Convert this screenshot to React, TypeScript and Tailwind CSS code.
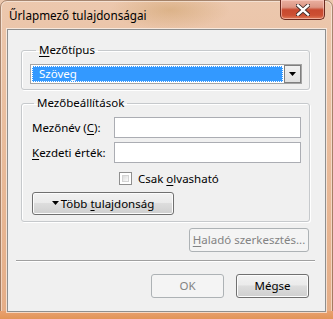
import React from 'react';

const font = { fontFamily: '"Noto Sans", "Open Sans", sans-serif' };

const btnFace =
  'bg-[linear-gradient(#f2f2f2_0%,#ebebeb_45%,#dddddd_50%,#cfcfcf_100%)] border border-[#707070] rounded-[3px] shadow-[inset_0_0_0_1px_#fcfcfc]';
const btnDisabled = 'bg-[#f4f4f4] border border-[#adb2b5] rounded-[3px] text-[#838383]';

const Arrow = () => (
  <svg width="7" height="4" viewBox="0 0 7 4" className="mr-[2px] mb-[2px]">
    <path d="M0 0h7L3.5 4z" fill="#000" />
  </svg>
);

const CloseButton = () => (
  <div className="absolute top-0 right-[8px] w-[45px] h-[20px] rounded-b-[5px] border border-t-0 border-[#6a2a1f] bg-[linear-gradient(#eab0a0_0%,#dc9684_38%,#c8492f_52%,#cc4f33_80%,#e07a58_100%)] shadow-[inset_0_0_0_1px_rgba(255,215,205,0.55)] flex items-center justify-center">
    <svg width="14" height="12" viewBox="0 0 14 12">
      <path
        d="M2 1.5l5 4.5 5-4.5M2 10.5l5-4.5 5 4.5"
        stroke="#3c2a28"
        strokeWidth="4.2"
        strokeLinecap="square"
        fill="none"
      />
      <path
        d="M2 1.5l5 4.5 5-4.5M2 10.5l5-4.5 5 4.5"
        stroke="#fff"
        strokeWidth="2.4"
        strokeLinecap="square"
        fill="none"
      />
    </svg>
  </div>
);

export default function App() {
  return (
    <div
      className="relative w-[333px] h-[319px] overflow-hidden text-[11.5px] leading-[16px] text-black bg-[linear-gradient(180deg,#ecc8ae_0%,#e9bd9d_40%,#e5ad86_100%)]"
      style={font}
    >
      <div className="absolute inset-0 bg-[radial-gradient(ellipse_60px_20px_at_170px_10px,rgba(190,140,70,0.35),transparent)]" />
      <div className="absolute inset-0 rounded-t-[7px] border border-[#7a5a46]/60 shadow-[inset_0_0_0_1px_rgba(255,255,255,0.45)]" />
      <div className="absolute left-0 right-0 bottom-0 h-[8px] bg-[linear-gradient(#e9a170,#e29558)]" />

      <div className="relative pl-[7px] pt-[29px]">
        <div className="absolute left-[9px] top-[7px] leading-[16px] text-[11.7px]">Űrlapmező tulajdonságai</div>

        <div className="w-[319px] h-[283px] bg-[#f0f0f0] border border-[#8e8f8f] shadow-[0_0_0_1px_rgba(255,255,255,0.6)] flex flex-col">
          <fieldset className="ml-[13px] mt-[12px] w-[289px] border border-[#c6c9cc] rounded-[3px] pl-[8px] pr-[7px] pt-[6px] pb-[5px] shadow-[inset_1px_1px_0_#fff,1px_1px_0_#fff]">
            <legend className="ml-[6px] px-[3px] leading-[16px]">
              <u className="underline-offset-2">M</u>ezőtípus
            </legend>
            <div className="h-[20px] flex border border-[#a4a4a4] bg-white">
              <div className="flex-1 m-[1px] bg-[#3399ff] outline-1 outline-dotted outline-white -outline-offset-1 text-white flex items-center pl-[7px]">
                Szöveg
              </div>
              <div className="w-[17px] h-[18px] border border-[#7f7f7f] bg-[linear-gradient(#f2f2f2,#e0e0e0)] flex items-center justify-center">
                <svg width="7" height="4" viewBox="0 0 7 4">
                  <path d="M0 0h7L3.5 4z" fill="#000" />
                </svg>
              </div>
            </div>
          </fieldset>

          <fieldset className="ml-[13px] mt-[5px] w-[289px] border border-[#c6c9cc] rounded-[3px] pl-[10px] pr-[8px] pt-[6px] pb-[6px] shadow-[inset_1px_1px_0_#fff,1px_1px_0_#fff]">
            <legend className="ml-[2px] px-[3px] leading-[16px]">Mezőbeállítások</legend>
            <div className="flex items-center h-[21px]">
              <div className="w-[82px]">
                Mezőnév (<u className="underline-offset-2">C</u>):
              </div>
              <div className="w-[187px] h-[21px] bg-white border border-[#abadb3]" />
            </div>
            <div className="flex items-center h-[21px] mt-[4px]">
              <div className="w-[82px]">
                <u className="underline-offset-2">K</u>ezdeti érték:
              </div>
              <div className="w-[187px] h-[21px] bg-white border border-[#abadb3]" />
            </div>
            <div className="flex items-center mt-[9px] ml-[87px] h-[13px]">
              <div className="w-[13px] h-[13px] border border-[#8f8f8f] bg-white p-[2px]">
                <div className="w-full h-full border border-[#d3d3d3] bg-[linear-gradient(135deg,#dcdcdc,#fbfbfb)]" />
              </div>
              <span className="ml-[6px]">
                Csak <u className="underline-offset-2">o</u>lvasható
              </span>
            </div>
            <button className={`mt-[7px] w-[142px] h-[23px] flex items-center justify-center ${btnFace}`}>
              <Arrow />
              Több <u className="underline-offset-2 ml-[3px]">t</u>ulajdonság
            </button>
          </fieldset>

          <div className="flex justify-end mt-[6px] mr-[16px]">
            <button className={`w-[120px] h-[24px] ${btnDisabled}`}>
              <u className="underline-offset-2">H</u>aladó szerkesztés...
            </button>
          </div>

          <div className="ml-[8px] mr-[10px] mt-[8px] h-[2px] border-t border-[#a0a0a0] border-b border-b-white" />

          <div className="flex justify-end gap-[12px] mt-[12px] mr-[16px]">
            <button className={`w-[73px] h-[24px] ${btnDisabled}`}>OK</button>
            <button className={`w-[73px] h-[24px] ${btnFace}`}>Mégse</button>
          </div>
        </div>
      </div>

      <CloseButton />
    </div>
  );
}
